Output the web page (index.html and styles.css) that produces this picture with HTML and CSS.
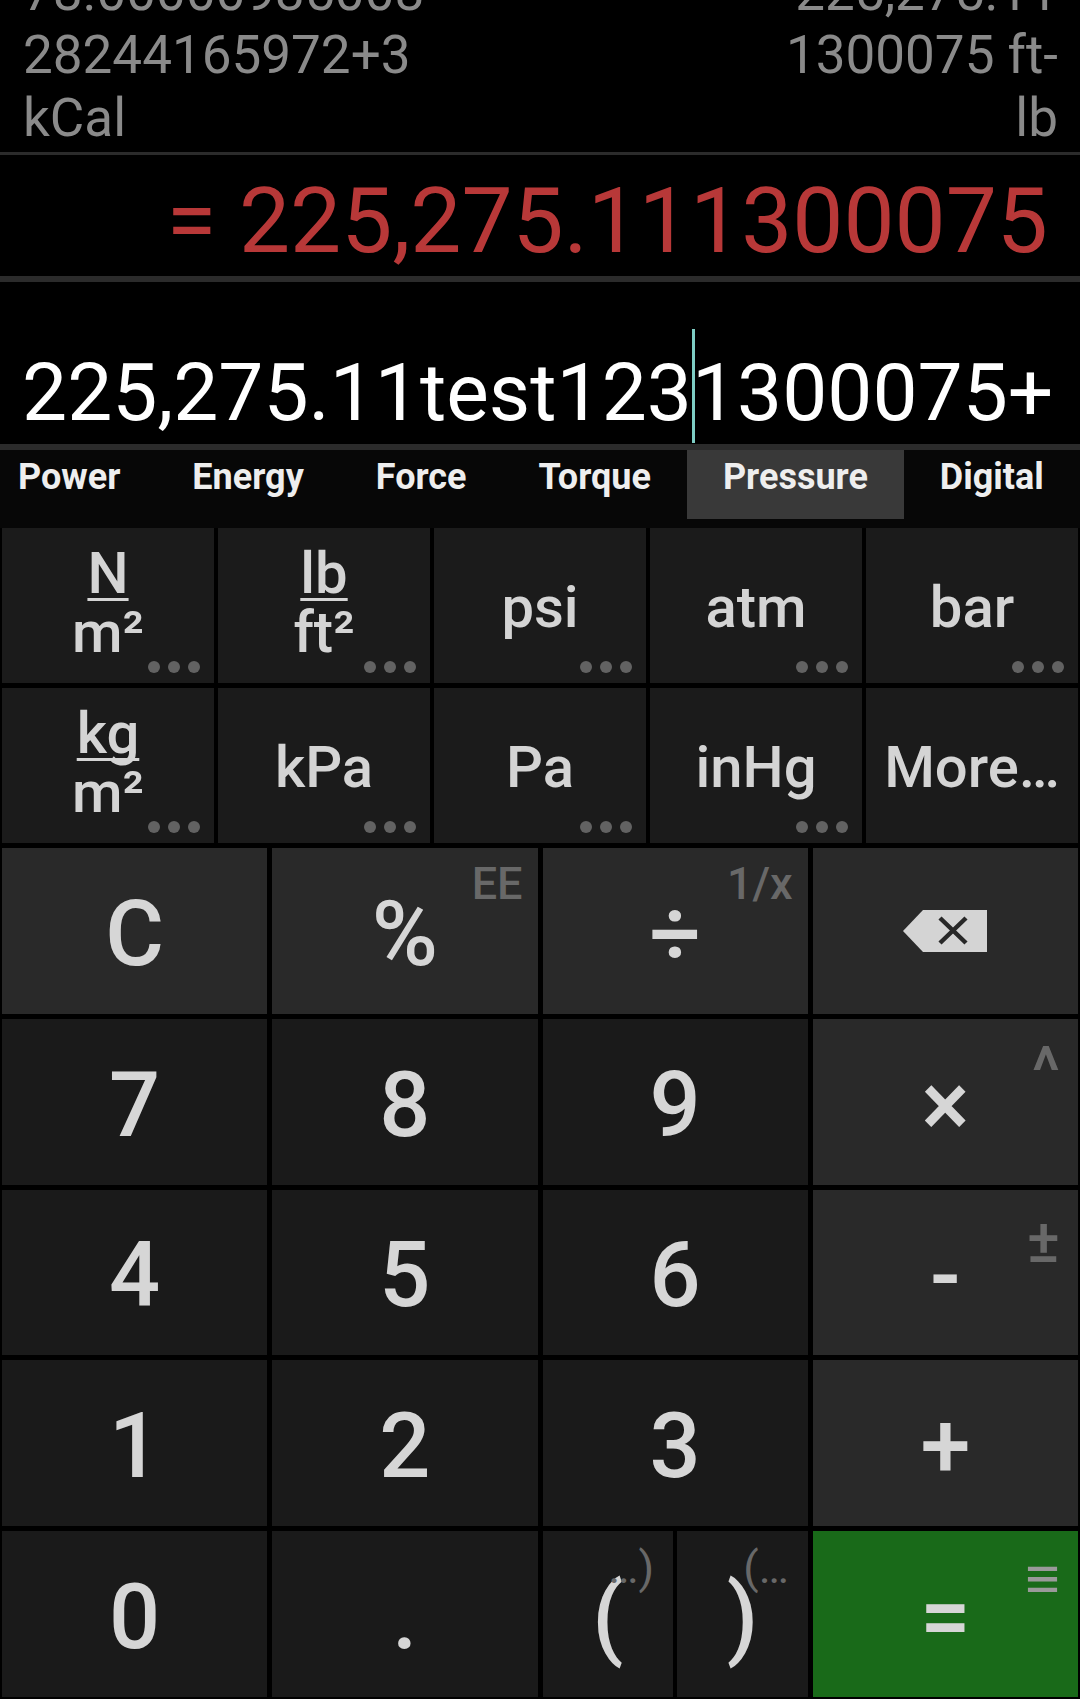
FILE: index.html
```html
<!DOCTYPE html>
<html lang="en">
<head>
<meta charset="utf-8">
<title>Calculator</title>
<link rel="stylesheet" href="styles.css">
</head>
<body>
<div class="app">
  <section class="history">
    <div class="hist-item">
      <div class="hist-expr">78.00000935008<br>28244165972+3<br>kCal</div>
      <div class="hist-res">225,275.11<br>1300075 ft-<br>lb</div>
    </div>
  </section>
  <div class="divider thin"></div>
  <section class="result">= 225,275.111300075</section>
  <div class="divider"></div>
  <section class="input"><span>225,275.11test123</span><span class="caret"></span><span>1300075+</span></section>
  <div class="divider"></div>
  <nav class="tabs">
    <div class="tab first">Power</div>
    <div class="tab">Energy</div>
    <div class="tab">Force</div>
    <div class="tab">Torque</div>
    <div class="tab active">Pressure</div>
    <div class="tab">Digital</div>
  </nav>
  <section class="units">
    <div class="unit"><span class="frac"><span class="num">N</span><span class="den">m²</span></span><span class="dots"><i></i><i></i><i></i></span></div>
    <div class="unit"><span class="frac"><span class="num">lb</span><span class="den">ft²</span></span><span class="dots"><i></i><i></i><i></i></span></div>
    <div class="unit"><span class="lbl">psi</span><span class="dots"><i></i><i></i><i></i></span></div>
    <div class="unit"><span class="lbl">atm</span><span class="dots"><i></i><i></i><i></i></span></div>
    <div class="unit"><span class="lbl">bar</span><span class="dots"><i></i><i></i><i></i></span></div>
    <div class="unit"><span class="frac"><span class="num">kg</span><span class="den">m²</span></span><span class="dots"><i></i><i></i><i></i></span></div>
    <div class="unit"><span class="lbl">kPa</span><span class="dots"><i></i><i></i><i></i></span></div>
    <div class="unit"><span class="lbl">Pa</span><span class="dots"><i></i><i></i><i></i></span></div>
    <div class="unit"><span class="lbl">inHg</span><span class="dots"><i></i><i></i><i></i></span></div>
    <div class="unit"><span class="lbl">More…</span></div>
  </section>
  <section class="keypad">
    <div class="key op">C</div>
    <div class="key op">%<span class="sup">EE</span></div>
    <div class="key op">÷<span class="sup">1/x</span></div>
    <div class="key op"><svg class="bksp" width="84" height="42" viewBox="0 0 84 42"><path d="M20 0H84V42H20L0 21Z" fill="#d4d4d4"/><path d="M37 8L63 33M63 8L37 33" stroke="#282828" stroke-width="4.5"/></svg></div>

    <div class="key">7</div>
    <div class="key">8</div>
    <div class="key">9</div>
    <div class="key op">×<span class="sup caret-sup">^</span></div>

    <div class="key">4</div>
    <div class="key">5</div>
    <div class="key">6</div>
    <div class="key op">-<span class="sup pm">±</span></div>

    <div class="key">1</div>
    <div class="key">2</div>
    <div class="key">3</div>
    <div class="key op">+</div>

    <div class="key">0</div>
    <div class="key">.</div>
    <div class="pair">
      <div class="key paren">(<span class="sup psup">…)</span></div>
      <div class="key paren">)<span class="sup psup">(…</span></div>
    </div>
    <div class="key eq">=<span class="sup menu">≡</span></div>
  </section>
</div>
</body>
</html>
```

FILE: styles.css
```css
html, body {
  margin: 0;
  padding: 0;
  background: #000;
}

.app {
  width: 1080px;
  height: 1699px;
  overflow: hidden;
  background: #000;
  font-family: Roboto, "Liberation Sans", sans-serif;
  display: flex;
  flex-direction: column;
}

.history {
  height: 152px;
  overflow: hidden;
  flex: none;
}

.hist-item {
  margin-top: -39px;
  display: flex;
  justify-content: space-between;
  padding: 0 22px 0 23px;
  font-size: 53px;
  line-height: 63px;
  color: #8a8a8a;
}

.hist-res {
  text-align: right;
}

.divider {
  height: 6px;
  background: #2b2b2b;
  flex: none;
}

.divider.thin {
  height: 3px;
}

.result {
  height: 121px;
  box-sizing: border-box;
  padding: 21px 32px 0 0;
  text-align: right;
  font-size: 91px;
  line-height: 91px;
  color: #b83838;
  white-space: nowrap;
  flex: none;
}

.input {
  height: 162px;
  box-sizing: border-box;
  padding: 71px 0 0 22px;
  font-size: 80.3px;
  line-height: 80px;
  color: #fff;
  white-space: nowrap;
  flex: none;
}

.caret {
  position: relative;
  display: inline-block;
  width: 0;
  height: 0;
}

.caret::after {
  content: "";
  position: absolute;
  left: 0;
  bottom: -23px;
  width: 3px;
  height: 114px;
  background: #7ecdc4;
}

.tabs {
  height: 78px;
  flex: none;
  display: flex;
  background: #070707;
  white-space: nowrap;
}

.tab {
  height: 69px;
  box-sizing: border-box;
  padding: 9px 36px 0;
  font-size: 36px;
  line-height: 36px;
  font-weight: 700;
  color: #eeeeee;
}

.tab.first {
  margin-left: -18px;
}

.tab.active {
  background: #393939;
}

.units {
  flex: none;
  display: grid;
  grid-template-columns: repeat(5, 1fr);
  grid-auto-rows: 155px;
  gap: 5px 4px;
  padding: 0 2px;
}

.unit {
  position: relative;
  background: #1b1b1b;
  display: flex;
  align-items: center;
  justify-content: center;
  font-size: 58px;
  line-height: 58px;
  font-weight: 500;
  color: #d4d4d4;
  padding-top: 3px;
  box-sizing: border-box;
}

.frac {
  display: flex;
  flex-direction: column;
  align-items: center;
  line-height: 59px;
  margin-bottom: 8px;
}

.num {
  text-decoration: underline;
  text-decoration-thickness: 3px;
  text-underline-offset: 5px;
  text-decoration-skip-ink: none;
}

.dots {
  position: absolute;
  right: 14px;
  bottom: 10px;
  display: flex;
  gap: 8px;
}

.dots i {
  width: 12px;
  height: 12px;
  border-radius: 50%;
  background: #626262;
}

.keypad {
  flex: 1;
  margin-top: 5px;
  display: grid;
  grid-template-columns: repeat(4, 1fr);
  grid-template-rows: repeat(5, 1fr);
  gap: 5px;
  padding: 0 2px 2px;
}

.key {
  position: relative;
  background: #1a1a1a;
  display: flex;
  align-items: center;
  justify-content: center;
  font-size: 90px;
  line-height: 90px;
  font-weight: 500;
  color: #d6d6d6;
  padding-top: 8px;
  box-sizing: border-box;
}

.key.op {
  background: #292929;
}

.key.eq {
  background: #196a19;
}

.bksp {
  margin-top: -8px;
}

.pair {
  display: grid;
  grid-template-columns: 1fr 1fr;
  gap: 4px;
}

.sup {
  position: absolute;
  top: 13px;
  right: 15px;
  font-size: 45px;
  line-height: 45px;
  font-weight: 500;
  color: #686868;
}

.caret-sup {
  font-size: 66px;
  line-height: 66px;
  top: 20px;
  right: 18px;
}

.pm {
  font-size: 62px;
  line-height: 62px;
  top: 20px;
  right: 18px;
}

.menu {
  font-size: 60px;
  line-height: 60px;
  top: 18px;
  right: 18px;
  color: #9a9a9a;
}

.psup {
  top: 14px;
  right: 19px;
  font-weight: 400;
}
```
